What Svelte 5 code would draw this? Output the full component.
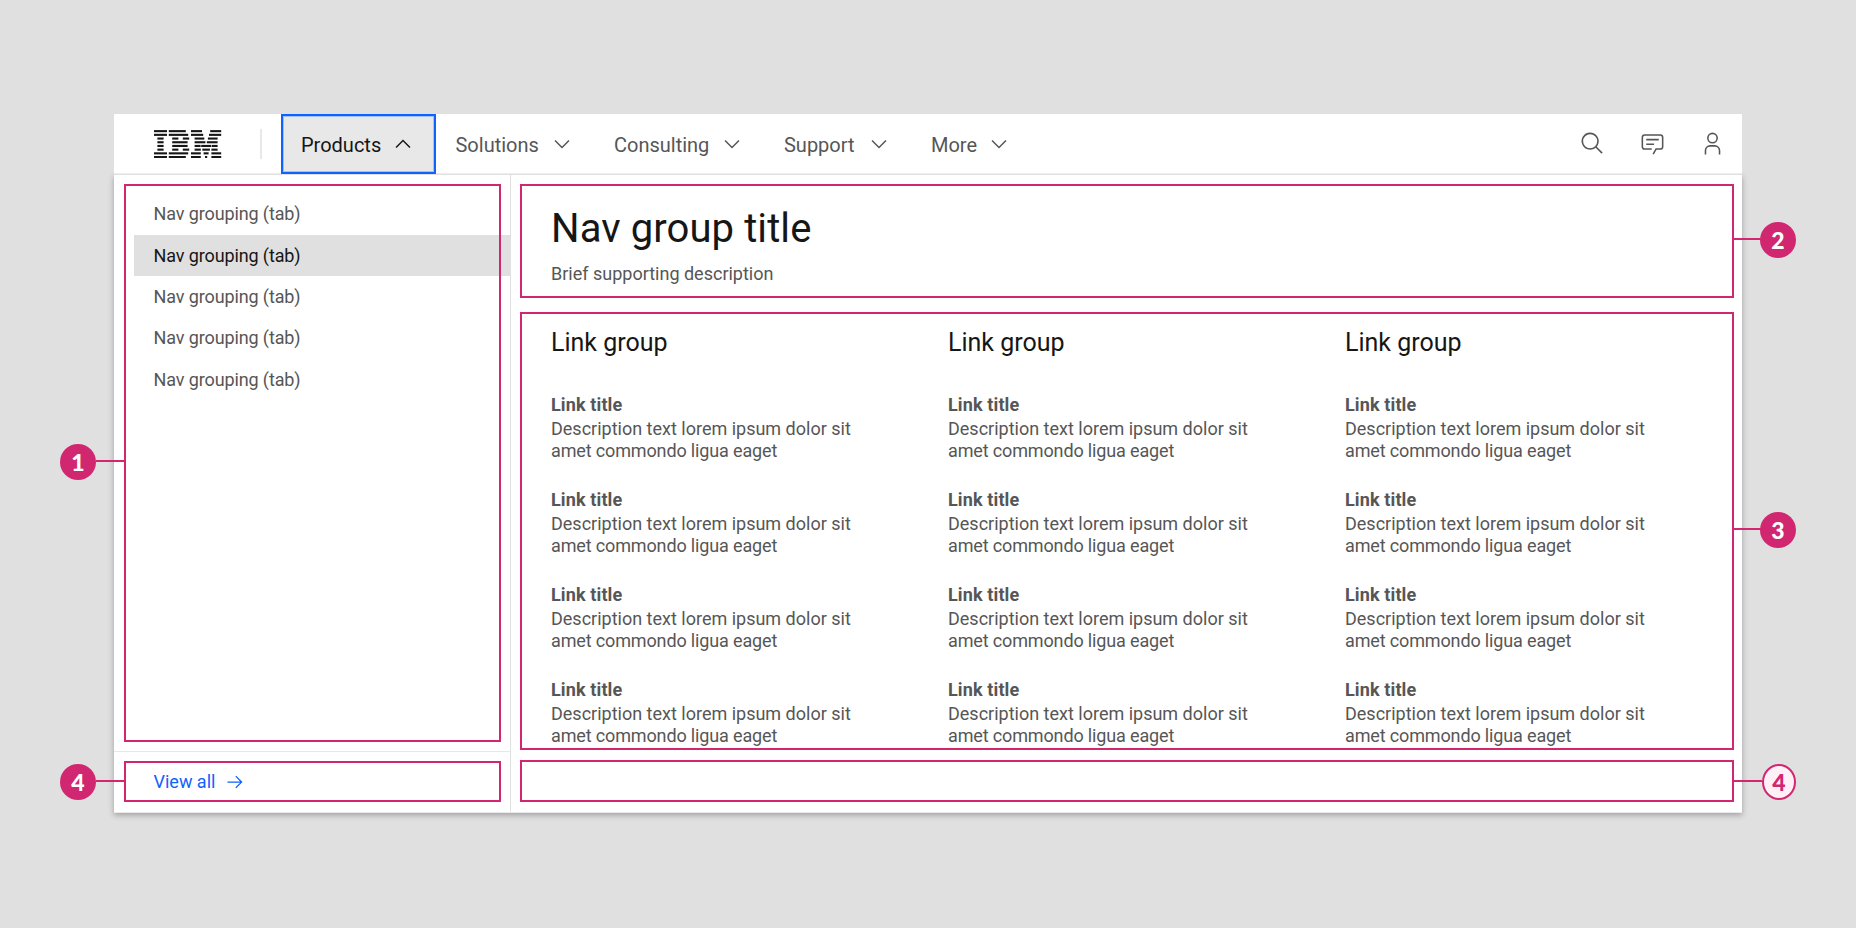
<script>
  const menus = [
    { label: 'Products', width: 154.5, open: true },
    { label: 'Solutions', width: 158.5 },
    { label: 'Consulting', width: 170 },
    { label: 'Support', width: 147 },
    { label: 'More', width: 120 }
  ];
  const tabs = [0, 1, 2, 3, 4];
  const selected = 1;
  const columns = [0, 1, 2];
  const links = [0, 1, 2, 3];

  // Eight horizontal bars of the logo, each a list of [start, end] spans.
  const bars = [
    [[0, 13], [14.8, 31.8], [37, 48], [56.2, 67.2]],
    [[0, 13], [14.8, 34.2], [37, 49.2], [55, 67.2]],
    [[3.4, 9.6], [18.2, 24.4], [28.8, 35.2], [40.6, 50.3], [53.9, 63.6]],
    [[3.4, 9.6], [18.2, 33.6], [40.6, 51.4], [52.8, 63.6]],
    [[3.4, 9.6], [18.2, 33.6], [40.6, 46.6], [47.2, 57], [57.6, 63.6]],
    [[3.4, 9.6], [18.2, 24.4], [28.8, 35.2], [40.6, 46.8], [48.3, 55.9], [57.4, 63.6]],
    [[0, 13], [14.8, 34.2], [37, 46.8], [49.6, 54.6], [57.4, 67.2]],
    [[0, 13], [14.8, 31.8], [37, 46.8], [51, 53.2], [57.4, 67.2]]
  ];
</script>

<div class="stage">
  <div class="panel">
    <header>
      <svg class="logo" width="68" height="28" viewBox="0 0 68 28" role="img" aria-label="IBM">
        {#each bars as spans, row}
          {#each spans as [from, to]}
            <rect x={from} y={0.1 + row * 3.7} width={to - from} height="2.1" />
          {/each}
        {/each}
      </svg>
      <span class="rule"></span>
      <nav>
        {#each menus as menu}
          <button class:open={menu.open} style="width: {menu.width}px">
            <span>{menu.label}</span>
            <svg width="24" height="24" viewBox="0 0 32 32">
              {#if menu.open}
                <path d="M16 10L26 20 24.6 21.4 16 12.8 7.4 21.4 6 20z" />
              {:else}
                <path d="M16 22L6 12 7.4 10.6 16 19.2 24.6 10.6 26 12z" />
              {/if}
            </svg>
          </button>
        {/each}
      </nav>
      <div class="tools">
        <svg width="25" height="25" viewBox="0 0 32 32">
          <path d="M29,27.5859l-7.5521-7.5521a11.0177,11.0177,0,1,0-1.4141,1.4141L27.5859,29ZM4,13a9,9,0,1,1,9,9A9.01,9.01,0,0,1,4,13Z" />
        </svg>
        <svg width="25" height="25" viewBox="0 0 32 32">
          <path d="M17.74,30,16,29l4-7h6a2,2,0,0,0,2-2V8a2,2,0,0,0-2-2H6A2,2,0,0,0,4,8V20a2,2,0,0,0,2,2h9v2H6a4,4,0,0,1-4-4V8A4,4,0,0,1,6,4H26a4,4,0,0,1,4,4V20a4,4,0,0,1-4,4H21.16Z" />
          <path d="M8 10H24V12H8zM8 16H18V18H8z" />
        </svg>
        <svg width="25" height="25" viewBox="0 0 32 32">
          <path d="M16,4a5,5,0,1,1-5,5,5,5,0,0,1,5-5m0-2a7,7,0,1,0,7,7A7,7,0,0,0,16,2Z" />
          <path d="M26,30H24V25a5,5,0,0,0-5-5H13a5,5,0,0,0-5,5v5H6V25a7,7,0,0,1,7-7h6a7,7,0,0,1,7,7Z" />
        </svg>
      </div>
    </header>

    <div class="menu">
      <aside>
        <div class="frame tabs">
          {#each tabs as tab}
            <div class="tab" class:selected={tab === selected}>Nav grouping (tab)</div>
          {/each}
          <span class="badge left mid">1</span>
        </div>
        <div class="divider"></div>
        <div class="frame viewall">
          <span>View all</span>
          <svg width="20" height="20" viewBox="0 0 32 32">
            <path d="M18 6L16.57 7.393 24.15 15 4 15 4 17 24.15 17 16.57 24.573 18 26 28 16z" />
          </svg>
          <span class="badge left low">4</span>
        </div>
      </aside>

      <main>
        <section class="frame intro">
          <h1>Nav group title</h1>
          <p>Brief supporting description</p>
          <span class="badge right top">2</span>
        </section>
        <section class="frame groups">
          {#each columns as _}
            <div class="group">
              <h2>Link group</h2>
              {#each links as _}
                <div class="link">
                  <h3>Link title</h3>
                  <p>Description text lorem ipsum dolor sit<br /><span class="tight">amet commondo ligua eaget</span></p>
                </div>
              {/each}
            </div>
          {/each}
          <span class="badge right center">3</span>
        </section>
        <section class="frame foot">
          <span class="badge right outline">4</span>
        </section>
      </main>
    </div>
  </div>
</div>

<style>
  :global(body) {
    margin: 0;
    background: #e0e0e0;
  }
  .stage {
    box-sizing: border-box;
    height: 928px;
    padding: 114px 114px 0;
    background: #e0e0e0;
    color: #565656;
    font-family: Roboto, 'Liberation Sans', sans-serif;
    font-size: 18px;
    overflow: hidden;
  }
  h1, h2, h3, p {
    margin: 0;
    font-weight: 400;
  }
  svg {
    display: block;
    flex: none;
    fill: currentColor;
  }
  header {
    position: relative;
    z-index: 1;
    box-sizing: border-box;
    display: flex;
    height: 61px;
    background: #fff;
    border-bottom: 1px solid #e0e0e0;
    box-shadow: inset 0 -1px #efefef;
  }
  .logo {
    margin: 16px 0 0 39.7px;
    color: #161616;
  }
  .rule {
    width: 2px;
    height: 30px;
    margin: 15px 0 0 38.3px;
    background: #e8e8e8;
  }
  nav {
    display: flex;
    height: 60px;
    margin-left: 19.5px;
  }
  button {
    box-sizing: border-box;
    display: flex;
    flex: none;
    align-items: center;
    justify-content: space-between;
    padding: 2.5px 20.5px 0 19.5px;
    border: 0;
    background: none;
    color: #565656;
    font: 20px/24px Roboto, sans-serif;
  }
  button svg {
    margin-top: -3px;
  }
  button.open {
    background: #e8e8e8;
    color: #161616;
    box-shadow: inset 0 0 0 2px #0f62fe, inset 0 0 0 3px #a3c1f8;
  }
  .tools {
    display: flex;
    gap: 34.6px;
    margin: 17px 17.4px 0 auto;
  }
  .menu {
    display: grid;
    grid-template-columns: 397px minmax(0, 1fr);
    box-sizing: border-box;
    height: 638px;
    background: #fff;
    border-bottom: 1px solid #eaeaea;
    box-shadow: 0 2px 6px rgba(0, 0, 0, 0.3);
  }
  aside {
    box-sizing: border-box;
    padding-top: 9px;
    border-right: 1px solid #e0e0e0;
  }
  .frame {
    position: relative;
    box-sizing: border-box;
  }
  .frame::after {
    content: '';
    position: absolute;
    inset: 0;
    border: 2px solid #d12771;
  }
  .tabs {
    height: 558px;
    margin: 0 9px 0 10px;
    padding: 9.4px 0 0 10px;
  }
  .tab {
    height: 41.35px;
    margin-right: -10px;
    padding-left: 19.5px;
    line-height: 41.35px;
    letter-spacing: -0.12px;
  }
  .tab.selected {
    background: #e0e0e0;
    color: #161616;
  }
  .divider {
    height: 1px;
    margin: 9px 0;
    background: #e8e8e8;
  }
  .viewall {
    display: flex;
    align-items: center;
    gap: 10px;
    height: 41px;
    margin: 0 9px 0 10px;
    padding-left: 29.5px;
    color: #0f62fe;
  }
  main {
    display: flex;
    flex-direction: column;
    padding: 9px 8px 0 9px;
  }
  .intro {
    height: 114px;
    margin-bottom: 14px;
    padding: 21px 0 0 31px;
  }
  h1 {
    margin-bottom: 8.6px;
    color: #161616;
    font-size: 40px;
    line-height: 48px;
    letter-spacing: 0.1px;
  }
  .intro p {
    line-height: 24px;
  }
  .groups {
    display: grid;
    grid-template-columns: repeat(3, 397px);
    height: 438px;
    margin-bottom: 10px;
    padding: 15px 0 0 31px;
  }
  h2 {
    margin-bottom: 34px;
    color: #161616;
    font-size: 25px;
    line-height: 32px;
  }
  .link {
    height: 94.9px;
  }
  h3 {
    margin-bottom: 1px;
    font-size: 18px;
    font-weight: 700;
    line-height: 24px;
    letter-spacing: 0.12px;
  }
  .link p {
    line-height: 22px;
  }
  .tight {
    letter-spacing: -0.14px;
  }
  .foot {
    height: 42px;
  }
  .badge {
    position: absolute;
    z-index: 2;
    box-sizing: border-box;
    width: 36px;
    height: 36px;
    border-radius: 50%;
    background: #d12771;
    color: #fff;
    font: 900 23px/36px Lato, sans-serif;
    text-align: center;
  }
  .badge::before {
    content: '';
    position: absolute;
    top: 16px;
    width: 28px;
    height: 2px;
    background: #d12771;
  }
  .left {
    left: -64px;
  }
  .left::before {
    left: 36px;
  }
  .right {
    right: -62px;
  }
  .right::before {
    right: 35px;
    width: 27px;
  }
  .mid {
    top: 260px;
  }
  .low {
    top: 3px;
  }
  .top {
    top: 38px;
  }
  .center {
    top: 200px;
  }
  .outline {
    top: 4px;
    width: 34px;
    border: 2px solid #d12771;
    background: #fff0f7;
    color: #d12771;
    line-height: 32px;
  }
  .outline::before {
    top: 14px;
    right: 32px;
    width: 28px;
  }
</style>
